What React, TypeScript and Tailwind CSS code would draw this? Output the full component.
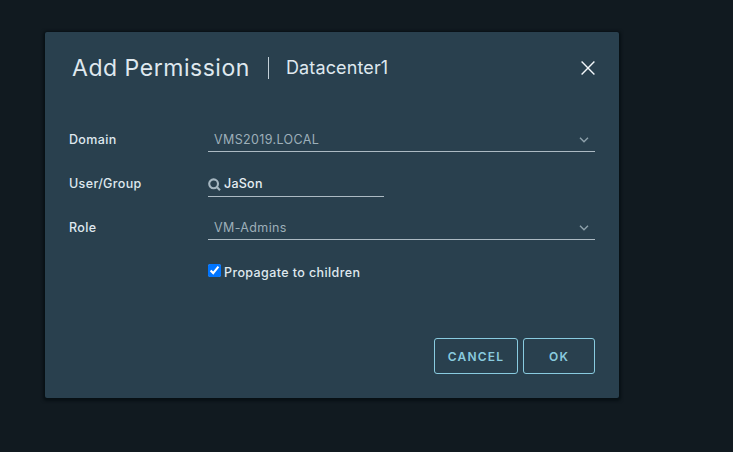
import type { ReactNode } from "react";

function Chevron() {
  return (
    <svg className="mr-[6px] h-[6px] w-[10px]" viewBox="0 0 10 6" fill="none" stroke="#8ea1ab" strokeWidth="1.4">
      <path d="M1 0.8 5 4.8 9 0.8" />
    </svg>
  );
}

function Row({ label, children }: { label: string; children: ReactNode }) {
  return (
    <div className="flex h-[44px] items-start">
      <div className="w-[139px] shrink-0 whitespace-nowrap pt-[2px] text-[12.5px] leading-[20px] font-medium tracking-[0.35px] text-[#dfe8ee]">
        {label}
      </div>
      {children}
    </div>
  );
}

function SelectField({ value }: { value: string }) {
  return (
    <button className="flex h-[24px] w-[387px] items-center justify-between border-b border-[#acbac3] pl-[6px] text-left text-[12.5px] leading-[20px] tracking-[0.37px] text-[#9dafb9]">
      <span>{value}</span>
      <Chevron />
    </button>
  );
}

export default function App() {
  return (
    <div className="flex h-[452px] w-[733px] flex-col bg-[#111a20] font-[Inter,sans-serif]">
      <div
        role="dialog"
        className="mt-[32px] ml-[45px] flex h-[366px] w-[574px] flex-col rounded-[2px] bg-[#29404e] pr-[24px] pl-[24px] shadow-[0_1px_3px_2px_rgba(0,10,14,0.6)]"
      >
        <header className="flex h-[72px] items-center pl-[3px]">
          <h1 className="w-[196px] text-[23px] leading-[32px] tracking-[0.53px] whitespace-nowrap text-[#dfe8ee]">
            Add Permission
          </h1>
          <div className="flex h-[22px] items-center border-l border-[#c3d0d8] pl-[17px] text-[18px] leading-[22px] tracking-[0.12px] text-[#dfe8ee]">
            Datacenter1
          </div>
          <button aria-label="Close" className="ml-auto">
            <svg className="h-[14px] w-[14px]" viewBox="0 0 14 14" fill="none" stroke="#f2f7fa" strokeWidth="1.4">
              <path d="M0.6 0.6 13.4 13.4M13.4 0.6 0.6 13.4" />
            </svg>
          </button>
        </header>

        <div className="mt-[24px] flex flex-col">
          <Row label="Domain">
            <SelectField value="VMS2019.LOCAL" />
          </Row>
          <Row label="User/Group">
            <div className="flex h-[25px] w-[176px] items-start border-b border-[#acbac3] pt-[2px] text-[12.5px] leading-[20px] font-medium tracking-[0.25px] text-[#e6eef3]">
              <svg className="mt-[4px] mr-[3px] h-[13px] w-[13px]" viewBox="0 0 13 13" fill="none" stroke="#a5b6c0" strokeWidth="2.1">
                <circle cx="5.6" cy="5.8" r="4.4" />
                <path d="M8.6 8.8 12 12.2" />
              </svg>
              <span>JaSon</span>
            </div>
          </Row>
          <Row label="Role">
            <SelectField value="VM-Admins" />
          </Row>
          <div className="ml-[139px] flex items-start pt-[3px] text-[12.5px] leading-[20px] font-medium tracking-[0.4px] whitespace-nowrap text-[#dfe8ee]">
            <input id="propagate" type="checkbox" defaultChecked className="mt-px mr-[3px] h-[13px] w-[13px]" />
            <label htmlFor="propagate">Propagate to children</label>
          </div>
        </div>

        <footer className="mt-auto mb-[24px] flex justify-end gap-[5px] text-[12px] font-semibold text-[#89cbdf]">
          <button className="h-[36px] w-[84px] rounded-[3px] border border-[#89cbdf] pt-px tracking-[1.2px]">CANCEL</button>
          <button className="h-[36px] w-[72px] rounded-[3px] border border-[#89cbdf] pt-px tracking-[1.2px]">OK</button>
        </footer>
      </div>
    </div>
  );
}
